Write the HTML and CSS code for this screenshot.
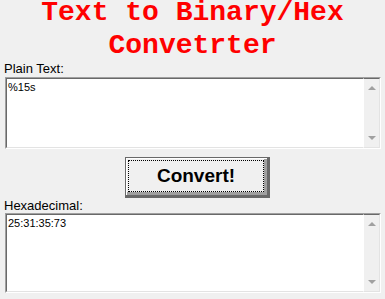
FILE: index.html
```html
<!DOCTYPE html>
<html>
<head>
<meta charset="utf-8">
<link rel="stylesheet" href="styles.css">
</head>
<body>
<h1 class="title"><span class="tline">Text to Binary/Hex</span><span class="tline tline2">Convetrter</span></h1>
<div class="label">Plain Text:</div>
<div class="box box-plain">
  <div class="content">%15s</div>
  <div class="scroll"><span class="arrow up"></span><span class="arrow down"></span></div>
</div>
<div class="btn-row">
  <button class="btn"><span class="focus">Convert!</span></button>
</div>
<div class="label label-hex">Hexadecimal:</div>
<div class="box box-hex">
  <div class="content">25:31:35:73</div>
  <div class="scroll"><span class="arrow up"></span><span class="arrow down"></span></div>
</div>
</body>
</html>
```
FILE: styles.css
```css
html, body {
  margin: 0;
  padding: 0;
  background: #f0f0f0;
}
body {
  width: 385px;
  height: 299px;
  overflow: hidden;
  font-family: "Liberation Sans", Arial, sans-serif;
}
.title {
  margin: 0;
  height: 61px;
  text-align: center;
  font-family: "Liberation Mono", "Courier New", monospace;
  font-size: 28px;
  font-weight: bold;
  color: #ff0000;
}
.tline {
  display: block;
  line-height: 25px;
}
.tline2 {
  margin-top: 8px;
}
.label {
  margin: 0 0 0 4px;
  font-size: 13px;
  line-height: 15px;
  color: #000;
  height: 16px;
}
.label-hex {
  height: 15px;
}
.box {
  margin-left: 5px;
  width: 376px;
  box-sizing: border-box;
  border-top: 1px solid #a0a0a0;
  border-left: 1px solid #a0a0a0;
  border-right: 1px solid #ffffff;
  border-bottom: 1px solid #ffffff;
  display: flex;
}
.box-plain { height: 72px; }
.box-hex { height: 80px; }
.box > .content {
  flex: 1;
  background: #fff;
  border-top: 1px solid #696969;
  border-left: 1px solid #696969;
  border-bottom: 1px solid #e3e3e3;
  font-size: 11px;
  line-height: 13px;
  padding: 2px 0 0 1px;
  color: #000;
}
.scroll {
  width: 17px;
  box-sizing: border-box;
  background: #f0f0f0;
  border-top: 1px solid #696969;
  border-right: 1px solid #e3e3e3;
  border-bottom: 1px solid #e3e3e3;
  border-left: 1px solid #ffffff;
  display: flex;
  flex-direction: column;
  justify-content: space-between;
  align-items: center;
  padding: 7px 0 7px;
}
.arrow {
  width: 0;
  height: 0;
  border-left: 4px solid transparent;
  border-right: 4px solid transparent;
}
.arrow.up { border-bottom: 4px solid #a0a0a0; }
.arrow.down { border-top: 4px solid #a0a0a0; }
.btn-row {
  padding: 8px 0 0 125px;
  height: 49px;
  box-sizing: border-box;
}
.btn {
  display: block;
  margin: 0;
  width: 145px;
  height: 41px;
  box-sizing: border-box;
  padding: 2px 3px 3px 2px;
  background: #f0f0f0;
  border: 1px solid #696969;
  box-shadow: inset 1px 1px 0 #ffffff, inset -2px -2px 0 #a0a0a0, inset -3px -3px 0 #a0a0a0;
  border-right-width: 3px;
  border-bottom-width: 3px;
  font-family: "Liberation Sans", Arial, sans-serif;
  font-size: 19px;
  font-weight: bold;
  color: #000;
}
.focus {
  display: flex;
  align-items: center;
  justify-content: center;
  width: 100%;
  height: 100%;
  box-sizing: border-box;
  border: 1px dotted #000;
}
```
